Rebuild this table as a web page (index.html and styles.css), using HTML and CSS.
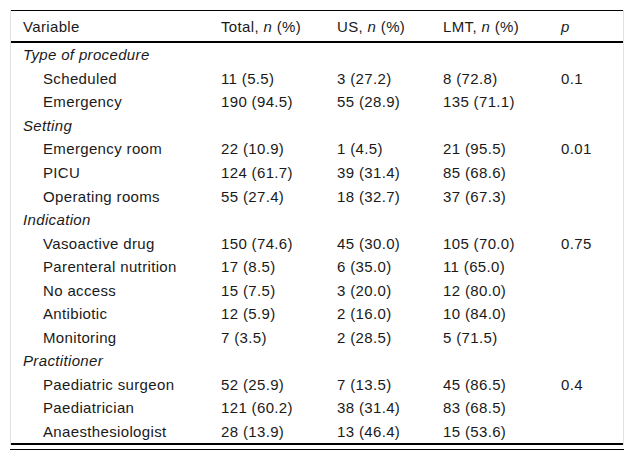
FILE: index.html
```html
<!DOCTYPE html>
<html>
<head>
<meta charset="utf-8">
<link rel="stylesheet" href="styles.css">
</head>
<body>
<div class="wrap">
  <table class="data">
    <colgroup>
      <col class="c1"><col class="c2"><col class="c3"><col class="c4"><col class="c5">
    </colgroup>
    <thead>
      <tr><th>Variable</th><th>Total, <i>n</i> (%)</th><th>US, <i>n</i> (%)</th><th>LMT, <i>n</i> (%)</th><th><i>p</i></th></tr>
    </thead>
    <tbody>
      <tr class="grp"><td colspan="5">Type of procedure</td></tr>
      <tr><td class="sub">Scheduled</td><td>11 (5.5)</td><td>3 (27.2)</td><td>8 (72.8)</td><td>0.1</td></tr>
      <tr><td class="sub">Emergency</td><td>190 (94.5)</td><td>55 (28.9)</td><td>135 (71.1)</td><td></td></tr>
      <tr class="grp"><td colspan="5">Setting</td></tr>
      <tr><td class="sub">Emergency room</td><td>22 (10.9)</td><td>1 (4.5)</td><td>21 (95.5)</td><td>0.01</td></tr>
      <tr><td class="sub">PICU</td><td>124 (61.7)</td><td>39 (31.4)</td><td>85 (68.6)</td><td></td></tr>
      <tr><td class="sub">Operating rooms</td><td>55 (27.4)</td><td>18 (32.7)</td><td>37 (67.3)</td><td></td></tr>
      <tr class="grp"><td colspan="5">Indication</td></tr>
      <tr><td class="sub">Vasoactive drug</td><td>150 (74.6)</td><td>45 (30.0)</td><td>105 (70.0)</td><td>0.75</td></tr>
      <tr><td class="sub">Parenteral nutrition</td><td>17 (8.5)</td><td>6 (35.0)</td><td>11 (65.0)</td><td></td></tr>
      <tr><td class="sub">No access</td><td>15 (7.5)</td><td>3 (20.0)</td><td>12 (80.0)</td><td></td></tr>
      <tr><td class="sub">Antibiotic</td><td>12 (5.9)</td><td>2 (16.0)</td><td>10 (84.0)</td><td></td></tr>
      <tr><td class="sub">Monitoring</td><td>7 (3.5)</td><td>2 (28.5)</td><td>5 (71.5)</td><td></td></tr>
      <tr class="grp"><td colspan="5">Practitioner</td></tr>
      <tr><td class="sub">Paediatric surgeon</td><td>52 (25.9)</td><td>7 (13.5)</td><td>45 (86.5)</td><td>0.4</td></tr>
      <tr><td class="sub">Paediatrician</td><td>121 (60.2)</td><td>38 (31.4)</td><td>83 (68.5)</td><td></td></tr>
      <tr><td class="sub">Anaesthesiologist</td><td>28 (13.9)</td><td>13 (46.4)</td><td>15 (53.6)</td><td></td></tr>
    </tbody>
  </table>
</div>
<div class="foot"></div>
</body>
</html>
```

FILE: styles.css
```css
html, body { margin: 0; padding: 0; background: #fff; }
body {
  font-family: "Liberation Sans", Arial, sans-serif;
  font-size: 15px;
  letter-spacing: 0.35px;
  color: #1a1a1a;
  padding: 10px 0 0 10px;
}
.wrap {
  width: 612px;
  border-left: 1px solid #e2e2e2;
  border-right: 1px solid #e2e2e2;
}
.data {
  width: 612px;
  border-collapse: collapse;
  table-layout: fixed;
}
.c1 { width: 198px; }
.c2 { width: 116px; }
.c3 { width: 106px; }
.c4 { width: 118px; }
.c5 { width: 74px; }
.data thead th {
  font-weight: normal;
  text-align: left;
  height: 30px;
  padding: 0 0 0 12px;
  border-top: 1px solid #000;
  border-bottom: 2px solid #000;
}
.data td {
  padding: 0 0 0 12px;
  height: 23.56px;
  line-height: 17px;
  white-space: nowrap;
}
.data td.sub { padding-left: 32px; }
.data tr.grp td { font-style: italic; }
.data tbody tr:last-child td { border-bottom: 2px solid #000; }
.foot {
  width: 614px;
  height: 4px;
  border-bottom: 1px solid #000;
}
```
